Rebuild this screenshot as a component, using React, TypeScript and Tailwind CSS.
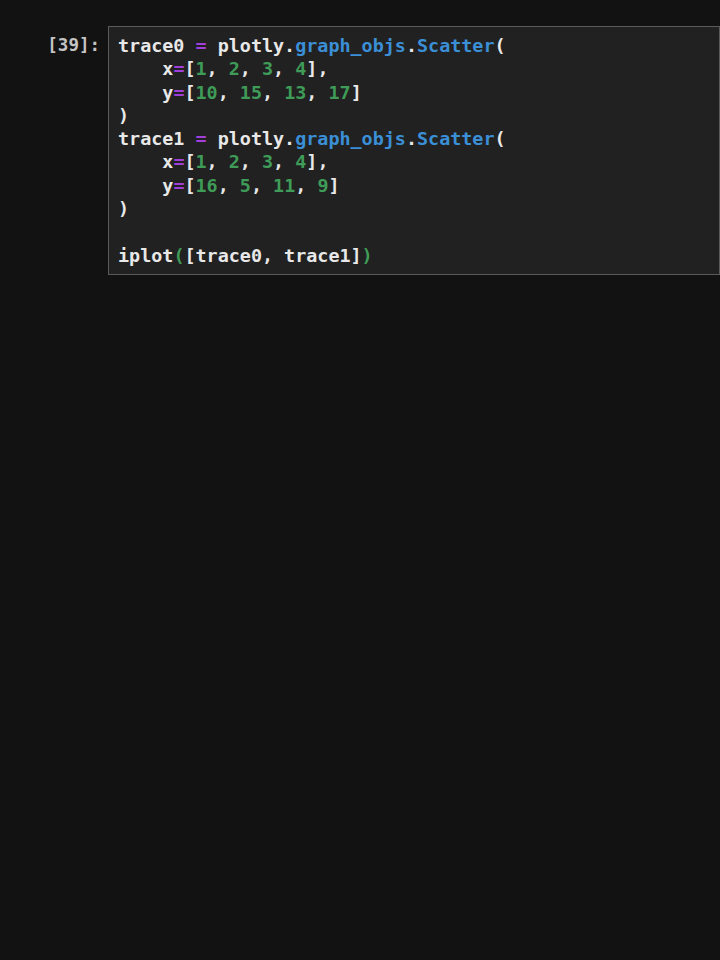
import React from "react";

const P = ({ c }: { c: string }) => <span className="text-[#a13fdc]">{c}</span>;
const N = ({ c }: { c: string }) => <span className="text-[#3f9c58]">{c}</span>;
const B = ({ c }: { c: string }) => <span className="text-[#3b8fd6]">{c}</span>;

export default function App() {
  return (
    <div
      className="w-[720px] h-[960px] bg-[#121212] overflow-hidden"
      style={{ fontFamily: '"DejaVu Sans Mono", "Liberation Mono", monospace' }}
    >
      <div className="flex pt-[26px]">
        <div className="w-[108px] shrink-0 pr-[8px] pt-[8px] text-right text-[17.5px] leading-[23.3px] text-[#c4c4c4] font-semibold">
          [39]:
        </div>
        <div className="flex-1 bg-[#212121] border border-[#5a5a5a] pl-[9px] pt-[7px] pb-[7px] text-[18.4px] leading-[23.3px] text-[#e8e8e8] font-semibold whitespace-pre">
          <div>trace0 <P c="=" /> plotly.<B c="graph_objs" />.<B c="Scatter" />(</div>
          <div>    x<P c="=" />[<N c="1" />, <N c="2" />, <N c="3" />, <N c="4" />],</div>
          <div>    y<P c="=" />[<N c="10" />, <N c="15" />, <N c="13" />, <N c="17" />]</div>
          <div>)</div>
          <div>trace1 <P c="=" /> plotly.<B c="graph_objs" />.<B c="Scatter" />(</div>
          <div>    x<P c="=" />[<N c="1" />, <N c="2" />, <N c="3" />, <N c="4" />],</div>
          <div>    y<P c="=" />[<N c="16" />, <N c="5" />, <N c="11" />, <N c="9" />]</div>
          <div>)</div>
          <div>{" "}</div>
          <div>iplot<N c="(" />[trace0, trace1]<N c=")" /></div>
        </div>
      </div>
    </div>
  );
}
